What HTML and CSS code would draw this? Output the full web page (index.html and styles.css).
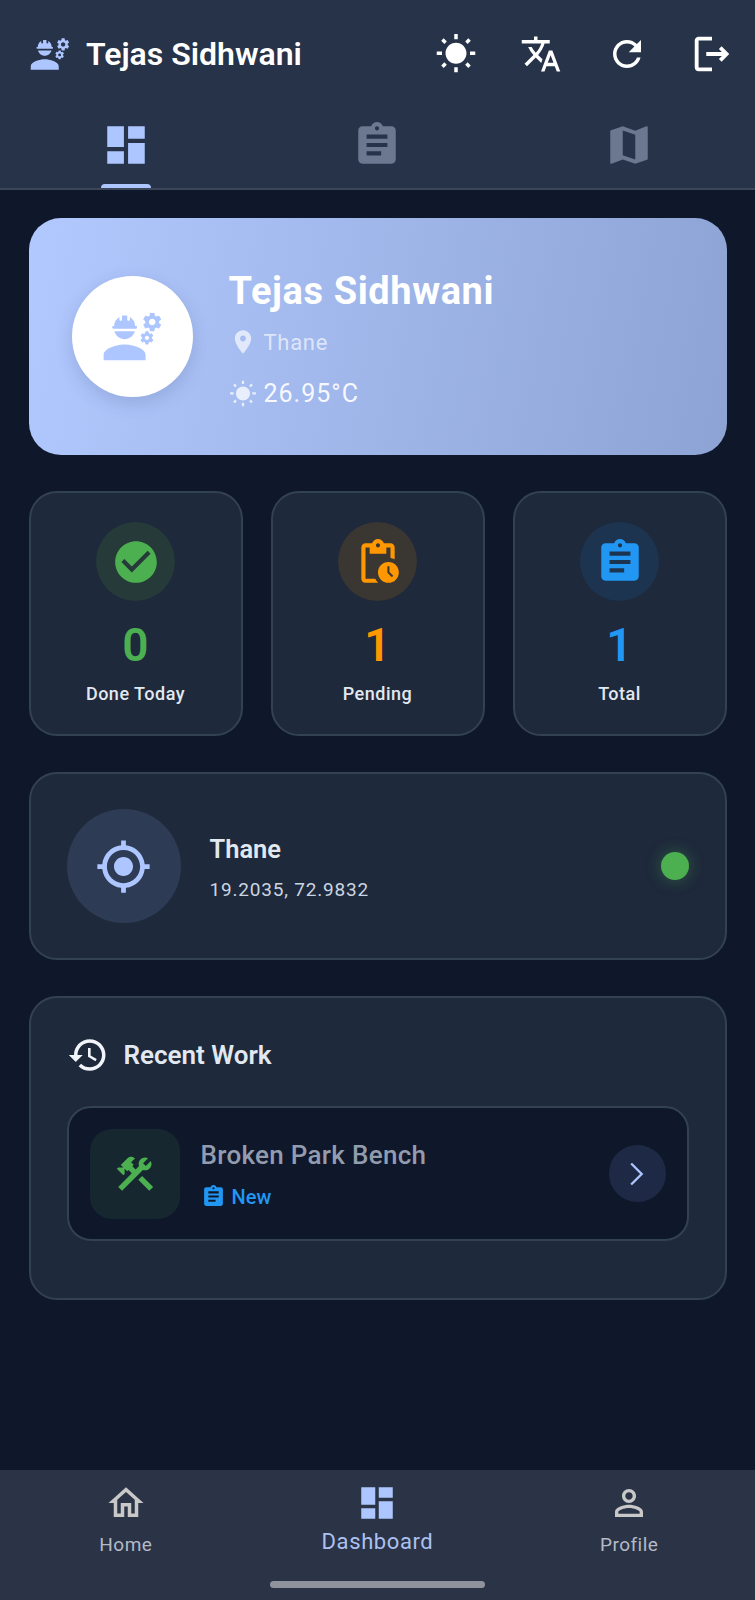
FILE: index.html
```html
<!DOCTYPE html>
<html>
<head>
    <title>Dashboard</title>
    <link rel="stylesheet" href="styles.css">
</head>
<body>
    <!-- Icon sprite -->
    <svg class="sprite">
        <symbol id="i-engineering" viewBox="0 0 24 24"><path d="M9 15c-2.67 0-8 1.34-8 4v2h16v-2c0-2.66-5.33-4-8-4zM22.1 6.84c.01-.11.02-.22.02-.34 0-.12-.01-.23-.03-.34l.74-.58c.07-.05.08-.15.04-.22l-.7-1.21c-.04-.08-.14-.1-.21-.08l-.86.35c-.18-.14-.38-.25-.59-.34l-.13-.93c-.02-.09-.09-.15-.18-.15h-1.4c-.09 0-.16.06-.17.15l-.13.93c-.21.09-.41.21-.59.34l-.87-.35c-.08-.03-.17 0-.21.08l-.7 1.21c-.04.08-.03.17.04.22l.74.58c-.02.11-.03.23-.03.34 0 .11.01.23.03.34l-.74.58c-.07.05-.08.15-.04.22l.7 1.21c.04.08.14.1.21.08l.87-.35c.18.14.38.25.59.34l.13.93c.01.09.08.15.17.15h1.4c.09 0 .16-.06.17-.15l.13-.93c.21-.09.41-.21.59-.34l.87.35c.08.03.17 0 .21-.08l.7-1.21c.04-.08.03-.17-.04-.22l-.73-.58zm-2.6.91c-.69 0-1.25-.56-1.25-1.25s.56-1.25 1.25-1.25 1.25.56 1.25 1.25-.56 1.25-1.25 1.25zM19.92 11.68l-.5-.87c-.03-.06-.1-.08-.15-.06l-.62.25c-.13-.1-.27-.18-.42-.24l-.09-.66c-.02-.06-.08-.1-.14-.1h-1c-.06 0-.11.04-.12.11l-.09.66c-.15.06-.29.15-.42.24l-.62-.25c-.06-.02-.12 0-.15.06l-.5.87c-.03.06-.02.12.03.16l.53.41c-.02.08-.03.16-.03.24 0 .08.01.17.02.25l-.53.41c-.05.04-.06.11-.03.16l.5.87c.03.06.1.08.15.06l.62-.25c.13.1.27.18.42.24l.09.66c.01.07.06.11.12.11h1c.06 0 .12-.04.12-.11l.09-.66c.15-.06.29-.15.42-.24l.62.25c.06.02.12 0 .15-.06l.5-.87c.03-.06.02-.12-.03-.16l-.52-.41c.02-.08.03-.16.03-.24 0-.08-.01-.17-.02-.25l.53-.41c.05-.04.06-.11.03-.16zm-2.42 1.65c-.46 0-.83-.38-.83-.83 0-.46.38-.83.83-.83s.83.38.83.83c0 .46-.37.83-.83.83zM4.74 9h8.53c.27 0 .49-.22.49-.49v-.02c0-.27-.22-.49-.49-.49H13c0-1.48-.81-2.75-2-3.45v.95c0 .28-.22.5-.5.5s-.5-.22-.5-.5V4.14C9.68 4.06 9.35 4 9 4s-.68.06-1 .14V5.5c0 .28-.22.5-.5.5S7 5.78 7 5.5v-.95C5.81 5.25 5 6.52 5 8h-.26c-.27 0-.49.22-.49.49v.03c0 .26.22.48.49.48zM9 13c1.86 0 3.41-1.28 3.86-3H5.14c.45 1.72 2 3 3.86 3z"/></symbol>
        <symbol id="i-sun" viewBox="0 0 24 24"><path d="M6.76 4.84l-1.8-1.79-1.41 1.41 1.79 1.79 1.42-1.41zM4 10.5H1v2h3v-2zm9-9.95h-2V3.5h2V.55zm7.45 3.91l-1.41-1.41-1.79 1.79 1.41 1.41 1.79-1.79zm-3.21 13.7l1.79 1.8 1.41-1.41-1.8-1.79-1.4 1.4zM20 10.5v2h3v-2h-3zm-8-5c-3.31 0-6 2.69-6 6s2.69 6 6 6 6-2.69 6-6-2.69-6-6-6zm-1 16.95h2V19.5h-2v2.95zm-7.45-3.91l1.41 1.41 1.79-1.8-1.41-1.41-1.79 1.8z"/></symbol>
        <symbol id="i-translate" viewBox="0 0 24 24"><path d="M12.87 15.07l-2.54-2.51.03-.03c1.74-1.94 2.98-4.17 3.71-6.53H17V4h-7V2H8v2H1v1.99h11.17C11.5 7.92 10.44 9.75 9 11.35 8.07 10.32 7.3 9.19 6.69 8h-2c.73 1.63 1.73 3.17 2.98 4.56l-5.09 5.02L4 19l5-5 3.11 3.11.76-2.04zM18.5 10h-2L12 22h2l1.12-3h4.75L21 22h2l-4.5-12zm-2.62 7l1.62-4.33L19.12 17h-3.24z"/></symbol>
        <symbol id="i-refresh" viewBox="0 0 24 24"><path d="M17.65 6.35C16.2 4.9 14.21 4 12 4c-4.42 0-7.99 3.58-7.99 8s3.57 8 7.99 8c3.73 0 6.84-2.55 7.73-6h-2.08c-.82 2.33-3.04 4-5.65 4-3.31 0-6-2.69-6-6s2.69-6 6-6c1.66 0 3.14.69 4.22 1.78L13 11h7V4l-2.35 2.35z"/></symbol>
        <symbol id="i-logout" viewBox="0 0 24 24"><path d="M17 8l-1.41 1.41L17.17 11H9v2h8.17l-1.58 1.58L17 16l4-4-4-4zM5 5h7V3H5c-1.1 0-2 .9-2 2v14c0 1.1.9 2 2 2h7v-2H5V5z"/></symbol>
        <symbol id="i-dashboard" viewBox="0 0 24 24"><path d="M3 13h8V3H3v10zm0 8h8v-6H3v6zm10 0h8V11h-8v10zm0-18v6h8V3h-8z"/></symbol>
        <symbol id="i-assignment" viewBox="0 0 24 24"><path d="M19 3h-4.18C14.4 1.84 13.3 1 12 1c-1.3 0-2.4.84-2.82 2H5c-1.1 0-2 .9-2 2v14c0 1.1.9 2 2 2h14c1.1 0 2-.9 2-2V5c0-1.1-.9-2-2-2zm-7 0c.55 0 1 .45 1 1s-.45 1-1 1-1-.45-1-1 .45-1 1-1zm2 14H7v-2h7v2zm3-4H7v-2h10v2zm0-4H7V7h10v2z"/></symbol>
        <symbol id="i-map" viewBox="0 0 24 24"><path d="M20.5 3l-.16.03L15 5.1 9 3 3.36 4.9c-.21.07-.36.25-.36.48V20.5c0 .28.22.5.5.5l.16-.03L9 18.9l6 2.1 5.64-1.9c.21-.07.36-.25.36-.48V3.5c0-.28-.22-.5-.5-.5zM15 19l-6-2.11V5l6 2.11V19z"/></symbol>
        <symbol id="i-place" viewBox="0 0 24 24"><path d="M12 2C8.13 2 5 5.13 5 9c0 5.25 7 13 7 13s7-7.75 7-13c0-3.87-3.13-7-7-7zm0 9.5c-1.38 0-2.5-1.12-2.5-2.5s1.12-2.5 2.5-2.5 2.5 1.12 2.5 2.5-1.12 2.5-2.5 2.5z"/></symbol>
        <symbol id="i-check" viewBox="0 0 24 24"><path d="M12 2C6.48 2 2 6.48 2 12s4.48 10 10 10 10-4.48 10-10S17.52 2 12 2zm-2 15l-5-5 1.41-1.41L10 14.17l7.59-7.59L19 8l-9 9z"/></symbol>
        <symbol id="i-pending" viewBox="0 0 24 24"><path d="M17 12c-2.76 0-5 2.24-5 5s2.24 5 5 5 5-2.24 5-5-2.24-5-5-5zm1.65 7.35L16.5 17.2V14h1v2.79l1.85 1.85-.7.71zM18 3h-3.18C14.4 1.84 13.3 1 12 1s-2.4.84-2.82 2H6c-1.1 0-2 .9-2 2v15c0 1.1.9 2 2 2h6.11c-.59-.57-1.07-1.25-1.42-2H6V5h2v3h8V5h2v5.08c.71.1 1.38.31 2 .6V5c0-1.1-.9-2-2-2zm-6 2c-.55 0-1-.45-1-1s.45-1 1-1 1 .45 1 1-.45 1-1 1z"/></symbol>
        <symbol id="i-location" viewBox="0 0 24 24"><path d="M12 8c-2.21 0-4 1.79-4 4s1.79 4 4 4 4-1.79 4-4-1.79-4-4-4zm8.94 3c-.46-4.17-3.77-7.48-7.94-7.94V1h-2v2.06C6.83 3.52 3.52 6.83 3.06 11H1v2h2.06c.46 4.17 3.77 7.48 7.94 7.94V23h2v-2.06c4.17-.46 7.48-3.77 7.94-7.94H23v-2h-2.06zM12 19c-3.87 0-7-3.13-7-7s3.13-7 7-7 7 3.13 7 7-3.13 7-7 7z"/></symbol>
        <symbol id="i-history" viewBox="0 0 24 24"><path d="M13 3c-4.97 0-9 4.03-9 9H1l3.89 3.89.07.14L9 12H6c0-3.87 3.13-7 7-7s7 3.13 7 7-3.13 7-7 7c-1.93 0-3.68-.79-4.94-2.06l-1.42 1.42C8.27 19.99 10.51 21 13 21c4.97 0 9-4.03 9-9s-4.03-9-9-9zm-1 5v5l4.28 2.54.72-1.21-3.5-2.08V8H12z"/></symbol>
        <symbol id="i-construction" viewBox="0 0 24 24"><path d="M13.783 15.172l2.121-2.121 5.996 5.996-2.121 2.121zM17.5 10c1.93 0 3.5-1.57 3.5-3.5 0-.58-.16-1.12-.41-1.6l-2.7 2.7-1.49-1.49 2.7-2.7c-.48-.25-1.02-.41-1.6-.41C15.57 3 14 4.57 14 6.5c0 .41.08.8.21 1.16l-1.85 1.85-1.78-1.78.71-.71-1.41-1.41L12 3.49c-1.17-1.17-3.07-1.17-4.24 0L4.22 7.03l1.41 1.41H2.81l-.71.71 3.54 3.54.71-.71V9.15l1.41 1.41.71-.71 1.78 1.78-7.41 7.41 2.12 2.12L16.34 9.79c.36.13.75.21 1.16.21z"/></symbol>
        <symbol id="i-home" viewBox="0 0 24 24"><path d="M12 5.69l5 4.5V18h-2v-6H9v6H7v-7.81l5-4.5M12 3L2 12h3v8h6v-6h2v6h6v-8h3L12 3z"/></symbol>
        <symbol id="i-person" viewBox="0 0 24 24"><path d="M12 5.9c1.16 0 2.1.94 2.1 2.1s-.94 2.1-2.1 2.1S9.9 9.16 9.9 8s.94-2.1 2.1-2.1m0 9c2.97 0 6.1 1.46 6.1 2.1v1.1H5.9V17c0-.64 3.13-2.1 6.1-2.1M12 4C9.79 4 8 5.79 8 8s1.79 4 4 4 4-1.79 4-4-1.79-4-4-4zm0 9c-2.67 0-8 1.34-8 4v3h16v-3c0-2.66-5.33-4-8-4z"/></symbol>
    </svg>

    <div class="app">
        <header class="topbar">
            <div class="appbar">
                <svg class="appbar-logo"><use href="#i-engineering"/></svg>
                <div class="appbar-title">Tejas Sidhwani</div>
                <div class="appbar-actions">
                    <svg class="action"><use href="#i-sun"/></svg>
                    <svg class="action"><use href="#i-translate"/></svg>
                    <svg class="action"><use href="#i-refresh"/></svg>
                    <svg class="action action-logout"><use href="#i-logout"/></svg>
                </div>
            </div>
            <div class="tabs">
                <div class="tab tab-active">
                    <svg class="tab-icon"><use href="#i-dashboard"/></svg>
                    <span class="tab-marker"></span>
                </div>
                <div class="tab">
                    <svg class="tab-icon"><use href="#i-assignment"/></svg>
                </div>
                <div class="tab">
                    <svg class="tab-icon"><use href="#i-map"/></svg>
                </div>
            </div>
        </header>

        <main class="content">
            <section class="hero">
                <div class="avatar">
                    <svg class="avatar-icon"><use href="#i-engineering"/></svg>
                </div>
                <div class="hero-info">
                    <div class="hero-name">Tejas Sidhwani</div>
                    <div class="hero-line hero-place">
                        <svg class="hero-icon"><use href="#i-place"/></svg>
                        <span>Thane</span>
                    </div>
                    <div class="hero-line hero-temp">
                        <svg class="hero-icon"><use href="#i-sun"/></svg>
                        <span>26.95°C</span>
                    </div>
                </div>
            </section>

            <section class="stats">
                <div class="card stat stat-green">
                    <div class="stat-circle"><svg class="stat-icon"><use href="#i-check"/></svg></div>
                    <div class="stat-value">0</div>
                    <div class="stat-label">Done Today</div>
                </div>
                <div class="card stat stat-orange">
                    <div class="stat-circle"><svg class="stat-icon"><use href="#i-pending"/></svg></div>
                    <div class="stat-value">1</div>
                    <div class="stat-label">Pending</div>
                </div>
                <div class="card stat stat-blue">
                    <div class="stat-circle"><svg class="stat-icon"><use href="#i-assignment"/></svg></div>
                    <div class="stat-value">1</div>
                    <div class="stat-label">Total</div>
                </div>
            </section>

            <section class="card location">
                <div class="location-circle">
                    <svg class="location-icon"><use href="#i-location"/></svg>
                </div>
                <div class="location-info">
                    <div class="location-name">Thane</div>
                    <div class="location-coords">19.2035, 72.9832</div>
                </div>
                <span class="status-dot"></span>
            </section>

            <section class="card recent">
                <div class="recent-head">
                    <svg class="recent-icon"><use href="#i-history"/></svg>
                    <h2 class="recent-title">Recent Work</h2>
                </div>
                <div class="work">
                    <div class="work-thumb">
                        <svg class="work-thumb-icon"><use href="#i-construction"/></svg>
                    </div>
                    <div class="work-info">
                        <div class="work-name">Broken Park Bench</div>
                        <div class="work-status">
                            <svg class="work-status-icon"><use href="#i-assignment"/></svg>
                            <span>New</span>
                        </div>
                    </div>
                    <div class="work-open">
                        <svg class="chevron" viewBox="0 0 24 24"><path d="M7 3l9 9-9 9"/></svg>
                    </div>
                </div>
            </section>
        </main>

        <nav class="bottomnav">
            <div class="nav-items">
                <div class="nav-item">
                    <svg class="nav-icon"><use href="#i-home"/></svg>
                    <span class="nav-label">Home</span>
                </div>
                <div class="nav-item nav-active">
                    <svg class="nav-icon"><use href="#i-dashboard"/></svg>
                    <span class="nav-label">Dashboard</span>
                </div>
                <div class="nav-item">
                    <svg class="nav-icon"><use href="#i-person"/></svg>
                    <span class="nav-label">Profile</span>
                </div>
            </div>
            <div class="gesture-bar"></div>
        </nav>
    </div>
</body>
</html>
```

FILE: styles.css
```css
/* Reset */
body, h2 {
    margin: 0;
    padding: 0;
}

/* Global styles */
body {
    font-family: Roboto, "Liberation Sans", sans-serif;
    background-color: #0f172a;
    color: #e2e8f0;
}

svg {
    fill: currentColor;
    display: block;
    flex: none;
}

.sprite {
    width: 0;
    height: 0;
    position: absolute;
}

.app {
    height: 1600px;
    display: flex;
    flex-direction: column;
    overflow: hidden;
}

/* Top bar */
.topbar {
    height: 190px;
    flex: none;
    box-sizing: border-box;
    background-color: #263348;
    border-bottom: 2px solid #3b4659;
}

.appbar {
    height: 108px;
    display: flex;
    align-items: center;
    padding: 0 22px 0 29px;
    color: #fff;
}

.appbar-logo {
    width: 42px;
    height: 42px;
    color: #adc6ff;
    margin-right: 15px;
}

.appbar-title {
    font-size: 32px;
    font-weight: 600;
    flex: 1;
}

.appbar-actions {
    display: flex;
    align-items: center;
    gap: 43.5px;
}

.action {
    width: 42px;
    height: 42px;
}

.action-logout {
    width: 46px;
    height: 46px;
    margin: -2px;
}

/* Tabs */
.tabs {
    display: grid;
    grid-template-columns: repeat(3, 1fr);
    height: 80px;
}

.tab {
    display: flex;
    flex-direction: column;
    align-items: center;
    color: #6b7890;
}

.tab-icon {
    width: 50px;
    height: 50px;
    margin-top: 12px;
}

.tab-active {
    color: #adc6ff;
}

.tab-marker {
    width: 50px;
    height: 4px;
    margin-top: auto;
    background-color: #adc6ff;
    border-radius: 6px 6px 0 0;
}

/* Main column */
.content {
    flex: 1;
    display: flex;
    flex-direction: column;
    gap: 36px;
    padding: 28px 28.5px 0;
}

.card {
    box-sizing: border-box;
    background-color: #1e293b;
    border: 2px solid #334155;
    border-radius: 28px;
}

/* Hero card */
.hero {
    height: 237px;
    flex: none;
    display: flex;
    align-items: center;
    padding-left: 43px;
    gap: 36px;
    border-radius: 32px;
    background: linear-gradient(100deg, #b2c9ff 0%, #8da3d4 100%);
    color: #fff;
}

.avatar {
    width: 121px;
    height: 121px;
    border-radius: 50%;
    background-color: #fff;
    color: #adc6ff;
    display: flex;
    align-items: center;
    justify-content: center;
    box-shadow: 0 6px 18px rgba(30, 50, 100, 0.16);
}

.avatar-icon {
    width: 63px;
    height: 63px;
}

.hero-info {
    padding-top: 4px;
}

.hero-name {
    font-size: 38px;
    font-weight: 700;
    letter-spacing: 0.6px;
    margin-bottom: 15px;
}

.hero-line {
    display: flex;
    align-items: center;
    gap: 7px;
}

.hero-icon {
    width: 28px;
    height: 28px;
}

.hero-place {
    font-size: 22px;
    letter-spacing: 0.7px;
    color: rgba(255, 255, 255, 0.65);
    margin-bottom: 23px;
}

.hero-temp {
    font-size: 25px;
    letter-spacing: 1px;
    color: rgba(255, 255, 255, 0.92);
}

.hero-temp .hero-icon {
    color: rgba(255, 255, 255, 0.75);
}

/* Stat cards */
.stats {
    display: grid;
    grid-template-columns: repeat(3, 1fr);
    gap: 28px;
    height: 245px;
    flex: none;
}

.stat {
    display: flex;
    flex-direction: column;
    align-items: center;
    padding-top: 29px;
}

.stat-circle {
    width: 79px;
    height: 79px;
    border-radius: 50%;
    display: flex;
    align-items: center;
    justify-content: center;
}

.stat-icon {
    width: 50px;
    height: 50px;
}

.stat-value {
    font-size: 46px;
    font-weight: 600;
    line-height: 52px;
    margin-top: 18px;
}

.stat-label {
    font-size: 18px;
    font-weight: 500;
    letter-spacing: 0.5px;
    color: #e2e8f0;
    margin-top: 12px;
}

.stat-green .stat-circle { background-color: #253a39; }
.stat-green .stat-icon, .stat-green .stat-value { color: #4caf50; }

.stat-orange .stat-circle { background-color: #3a3632; }
.stat-orange .stat-icon, .stat-orange .stat-value { color: #ff9800; }

.stat-blue .stat-circle { background-color: #1d3450; }
.stat-blue .stat-icon, .stat-blue .stat-value { color: #2196f3; }

/* Location card */
.location {
    height: 188px;
    flex: none;
    display: flex;
    align-items: center;
    padding: 0 36px;
}

.location-circle {
    width: 114px;
    height: 114px;
    border-radius: 50%;
    background-color: #2e3b55;
    color: #adc6ff;
    display: flex;
    align-items: center;
    justify-content: center;
    margin-right: 29px;
}

.location-icon {
    width: 57px;
    height: 57px;
}

.location-info {
    flex: 1;
    padding-top: 3px;
}

.location-name {
    font-size: 25.5px;
    font-weight: 600;
    margin-bottom: 14px;
}

.location-coords {
    font-size: 19px;
    letter-spacing: 0.8px;
    color: #cbd5e1;
}

.status-dot {
    width: 28px;
    height: 28px;
    border-radius: 50%;
    background-color: #4caf50;
    box-shadow: 0 0 16px rgba(76, 175, 80, 0.4);
}

/* Recent work */
.recent {
    height: 304px;
    flex: none;
    padding: 36px 36px 0;
}

.recent-head {
    display: flex;
    align-items: center;
    gap: 15px;
    margin-bottom: 30px;
}

.recent-icon {
    width: 42px;
    height: 42px;
    color: #f1f5f9;
}

.recent-title {
    font-size: 26px;
    font-weight: 600;
}

.work {
    box-sizing: border-box;
    height: 135px;
    display: flex;
    align-items: center;
    padding: 0 21px;
    background-color: #0f172a;
    border: 2px solid #334155;
    border-radius: 24px;
}

.work-thumb {
    width: 90px;
    height: 90px;
    border-radius: 22px;
    background-color: #17272f;
    color: #4caf50;
    display: flex;
    align-items: center;
    justify-content: center;
    margin-right: 21px;
}

.work-thumb-icon {
    width: 44px;
    height: 44px;
}

.work-info {
    flex: 1;
    padding-top: 2px;
}

.work-name {
    font-size: 26px;
    font-weight: 500;
    letter-spacing: 0.3px;
    color: #929cae;
    margin-bottom: 14px;
}

.work-status {
    display: flex;
    align-items: center;
    gap: 6px;
    font-size: 20px;
    font-weight: 500;
    color: #2196f3;
}

.work-status-icon {
    width: 25px;
    height: 25px;
}

.work-open {
    width: 57px;
    height: 57px;
    border-radius: 50%;
    background-color: #1e2a45;
    display: flex;
    align-items: center;
    justify-content: center;
}

.chevron {
    width: 28px;
    height: 28px;
    fill: none;
    stroke: #adc6ff;
    stroke-width: 2;
}

/* Bottom navigation */
.bottomnav {
    height: 130px;
    flex: none;
    box-sizing: border-box;
    background-color: #2a3446;
    display: flex;
    flex-direction: column;
}

.nav-items {
    display: grid;
    grid-template-columns: repeat(3, 1fr);
    height: 111px;
}

.nav-item {
    display: flex;
    flex-direction: column;
    align-items: center;
    padding-top: 12px;
    color: #c8c8c8;
}

.nav-icon {
    width: 42px;
    height: 42px;
}

.nav-label {
    font-size: 19px;
    letter-spacing: 0.5px;
    margin-top: 9px;
    color: #b4bac6;
}

.nav-active {
    color: #adc6ff;
}

.nav-active .nav-label {
    font-size: 22px;
    letter-spacing: 0.6px;
    margin-top: 5px;
    color: #adc0f0;
}

.gesture-bar {
    width: 215px;
    height: 7px;
    margin: 0 auto;
    border-radius: 4px;
    background-color: #8e939c;
}
```
